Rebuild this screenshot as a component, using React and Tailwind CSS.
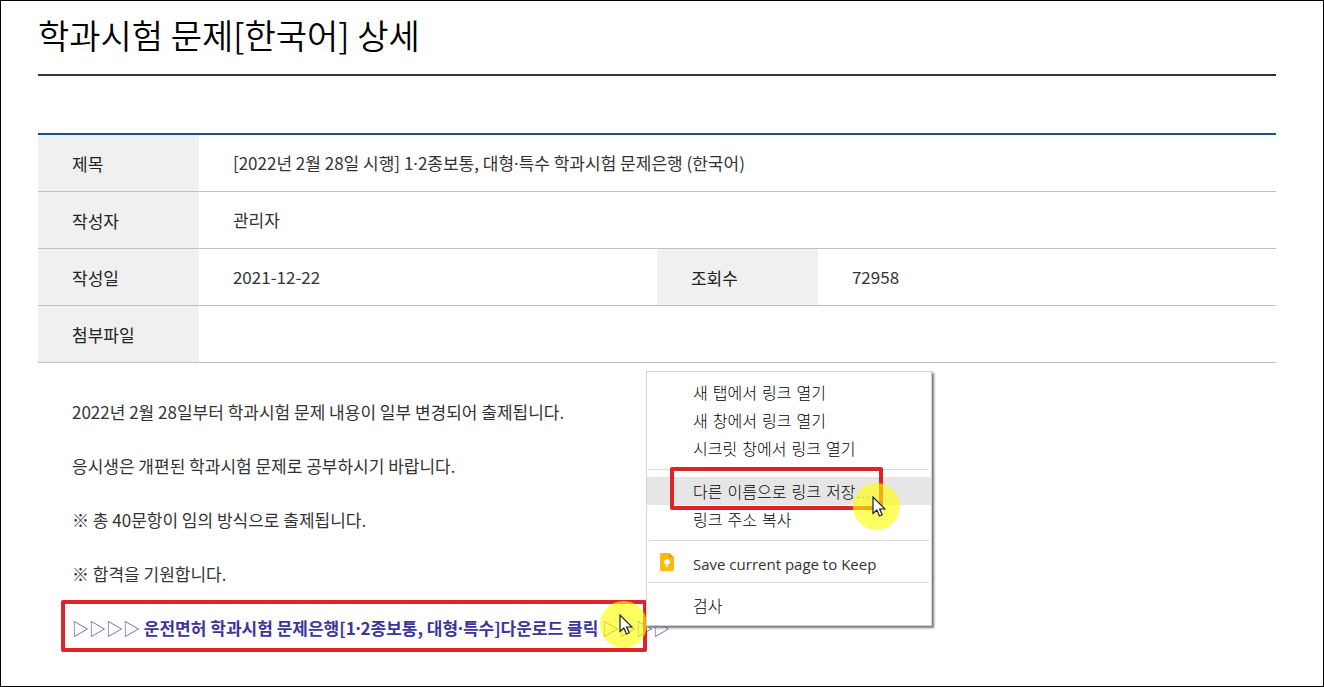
const notice = [
  '2022년 2월 28일부터 학과시험 문제 내용이 일부 변경되어 출제됩니다.',
  '응시생은 개편된 학과시험 문제로 공부하시기 바랍니다.',
  '※ 총 40문항이 임의 방식으로 출제됩니다.',
  '※ 합격을 기원합니다.',
];

const th = 'h-[57px] bg-[#f0f0f0] pl-[34px] pt-[2px] text-left font-normal text-[#222]';
const td = 'h-[57px] pl-[34px] text-[#333]';

function Dot() {
  return <span className="font-['Noto_Sans',sans-serif]">·</span>;
}

function Pointer() {
  return (
    <svg className="absolute left-[19px] top-[13px] h-[22px] w-[14px]" viewBox="0 0 14 22" aria-hidden="true">
      <path d="M1 1v16.500l3.800-3.500 2.700 6 2.700-1.200-2.600-5.800H13z" fill="#fff" stroke="#1c1c2c" strokeWidth="1.200" />
    </svg>
  );
}

function Spotlight({ className }) {
  return (
    <span className={`absolute size-[47px] rounded-full bg-[#ffff00]/62 ${className}`}>
      <Pointer />
    </span>
  );
}

function KeepIcon() {
  return (
    <svg className="absolute left-[13px] top-1 h-[18px] w-[14px]" viewBox="0 0 14 18" aria-hidden="true">
      <path d="M1.500 0H9l5 4.500v12a1.500 1.500 0 0 1-1.500 1.500h-11A1.500 1.500 0 0 1 0 16.500v-15A1.500 1.500 0 0 1 1.500 0z" fill="#f9bb0f" />
      <path d="M9 0l5 4.500H9z" fill="#e79a10" />
      <circle cx="7" cy="9" r="2.800" fill="#fff" />
      <path d="M5.600 12.500h2.800v1.200H5.600z" fill="#fff" />
    </svg>
  );
}

function MenuItem({ children, active, icon }) {
  return (
    <button
      type="button"
      role="menuitem"
      className={`relative block h-7 w-full pt-[3px] pl-[46px] text-left leading-6 whitespace-nowrap ${active ? 'bg-[#e6e6e6]' : ''}`}
    >
      {icon}
      {children}
    </button>
  );
}

function ContextMenu() {
  return (
    <div
      role="menu"
      className="absolute left-[645px] top-[370px] w-[286px] border border-[#d4d4d4] bg-white font-['DejaVu_Sans','Noto_Sans_CJK_KR',sans-serif] text-base font-light text-black shadow-[2px_2px_2px_#777]"
    >
      <div className="pt-[6px] pb-[7px]">
        <MenuItem>새 탭에서 링크 열기</MenuItem>
        <MenuItem>새 창에서 링크 열기</MenuItem>
        <MenuItem>시크릿 창에서 링크 열기</MenuItem>
      </div>
      <hr className="mx-[2px] border-[#d9d9d9]" />
      <div className="relative py-[7px]">
        <MenuItem active>다른 이름으로 링크 저장...</MenuItem>
        <MenuItem>링크 주소 복사</MenuItem>
        <span className="absolute -top-[3px] left-[23px] h-[43px] w-[213px] rounded-[2px] border-4 border-[#e0222b]" />
        <Spotlight className="left-[206px] top-[13px]" />
      </div>
      <hr className="mx-[2px] border-[#d9d9d9]" />
      <div className="pt-2 pb-[5px]">
        <MenuItem icon={<KeepIcon />}>
          <span className="font-['Open_Sans',sans-serif] text-[15px] font-normal text-[#333]">Save current page to Keep</span>
        </MenuItem>
      </div>
      <hr className="mx-[2px] border-[#d9d9d9]" />
      <div className="pt-2 pb-[6px]">
        <MenuItem>검사</MenuItem>
      </div>
    </div>
  );
}

export default function App() {
  return (
    <div className="relative min-h-screen border border-black bg-white pr-[47px] pl-[37px] font-['Noto_Sans_CJK_KR',sans-serif] text-[17px] leading-[27px] text-[#333]">
      <h1 className="border-b-2 border-[#333] pt-[9px] pb-[14px] text-[34px] leading-[50px] font-[350] text-black">
        학과시험 문제[한국어] 상세
      </h1>

      <table className="mt-[57px] w-full table-fixed border-collapse border-t-2 border-[#1f4e89]">
        <colgroup>
          <col className="w-[13%]" />
          <col className="w-[37%]" />
          <col className="w-[13%]" />
          <col className="w-[37%]" />
        </colgroup>
        <tbody>
          <tr className="border-b border-[#c0c0c0]">
            <th scope="row" className={th}>제목</th>
            <td colSpan={3} className={td}>
              [2022년 2월 28일 시행] 1<Dot />2종보통, 대형<Dot />특수 학과시험 문제은행 (한국어)
            </td>
          </tr>
          <tr className="border-b border-[#c0c0c0]">
            <th scope="row" className={th}>작성자</th>
            <td colSpan={3} className={td}>관리자</td>
          </tr>
          <tr className="border-b border-[#c0c0c0]">
            <th scope="row" className={th}>작성일</th>
            <td className={td}>2021-12-22</td>
            <th scope="row" className={th}>조회수</th>
            <td className={td}>72958</td>
          </tr>
          <tr className="border-b border-[#c0c0c0]">
            <th scope="row" className={th}>첨부파일</th>
            <td colSpan={3} className={td} />
          </tr>
        </tbody>
      </table>

      <div className="flex flex-col gap-[27px] px-[34px] pt-[35px]">
        {notice.map((line) => (
          <p key={line}>{line}</p>
        ))}
        <p className="relative whitespace-nowrap">
          <a href="#download" className="font-medium text-[#3b359c]">
            <span className="font-light">▷▷▷▷</span>{' '}
            <strong className="font-bold">
              운전면허 학과시험 문제은행[1<Dot />2종보통, 대형<Dot />특수]다운로드 클릭
            </strong>{' '}
            <span className="font-light">▷▷▷▷</span>
          </a>
          <span className="absolute -top-[14px] -left-[11px] h-[52px] w-[586px] rounded-[2px] border-4 border-[#e0222b]" />
          <Spotlight className="-top-[13px] left-[528px]" />
        </p>
      </div>

      <ContextMenu />
    </div>
  );
}
